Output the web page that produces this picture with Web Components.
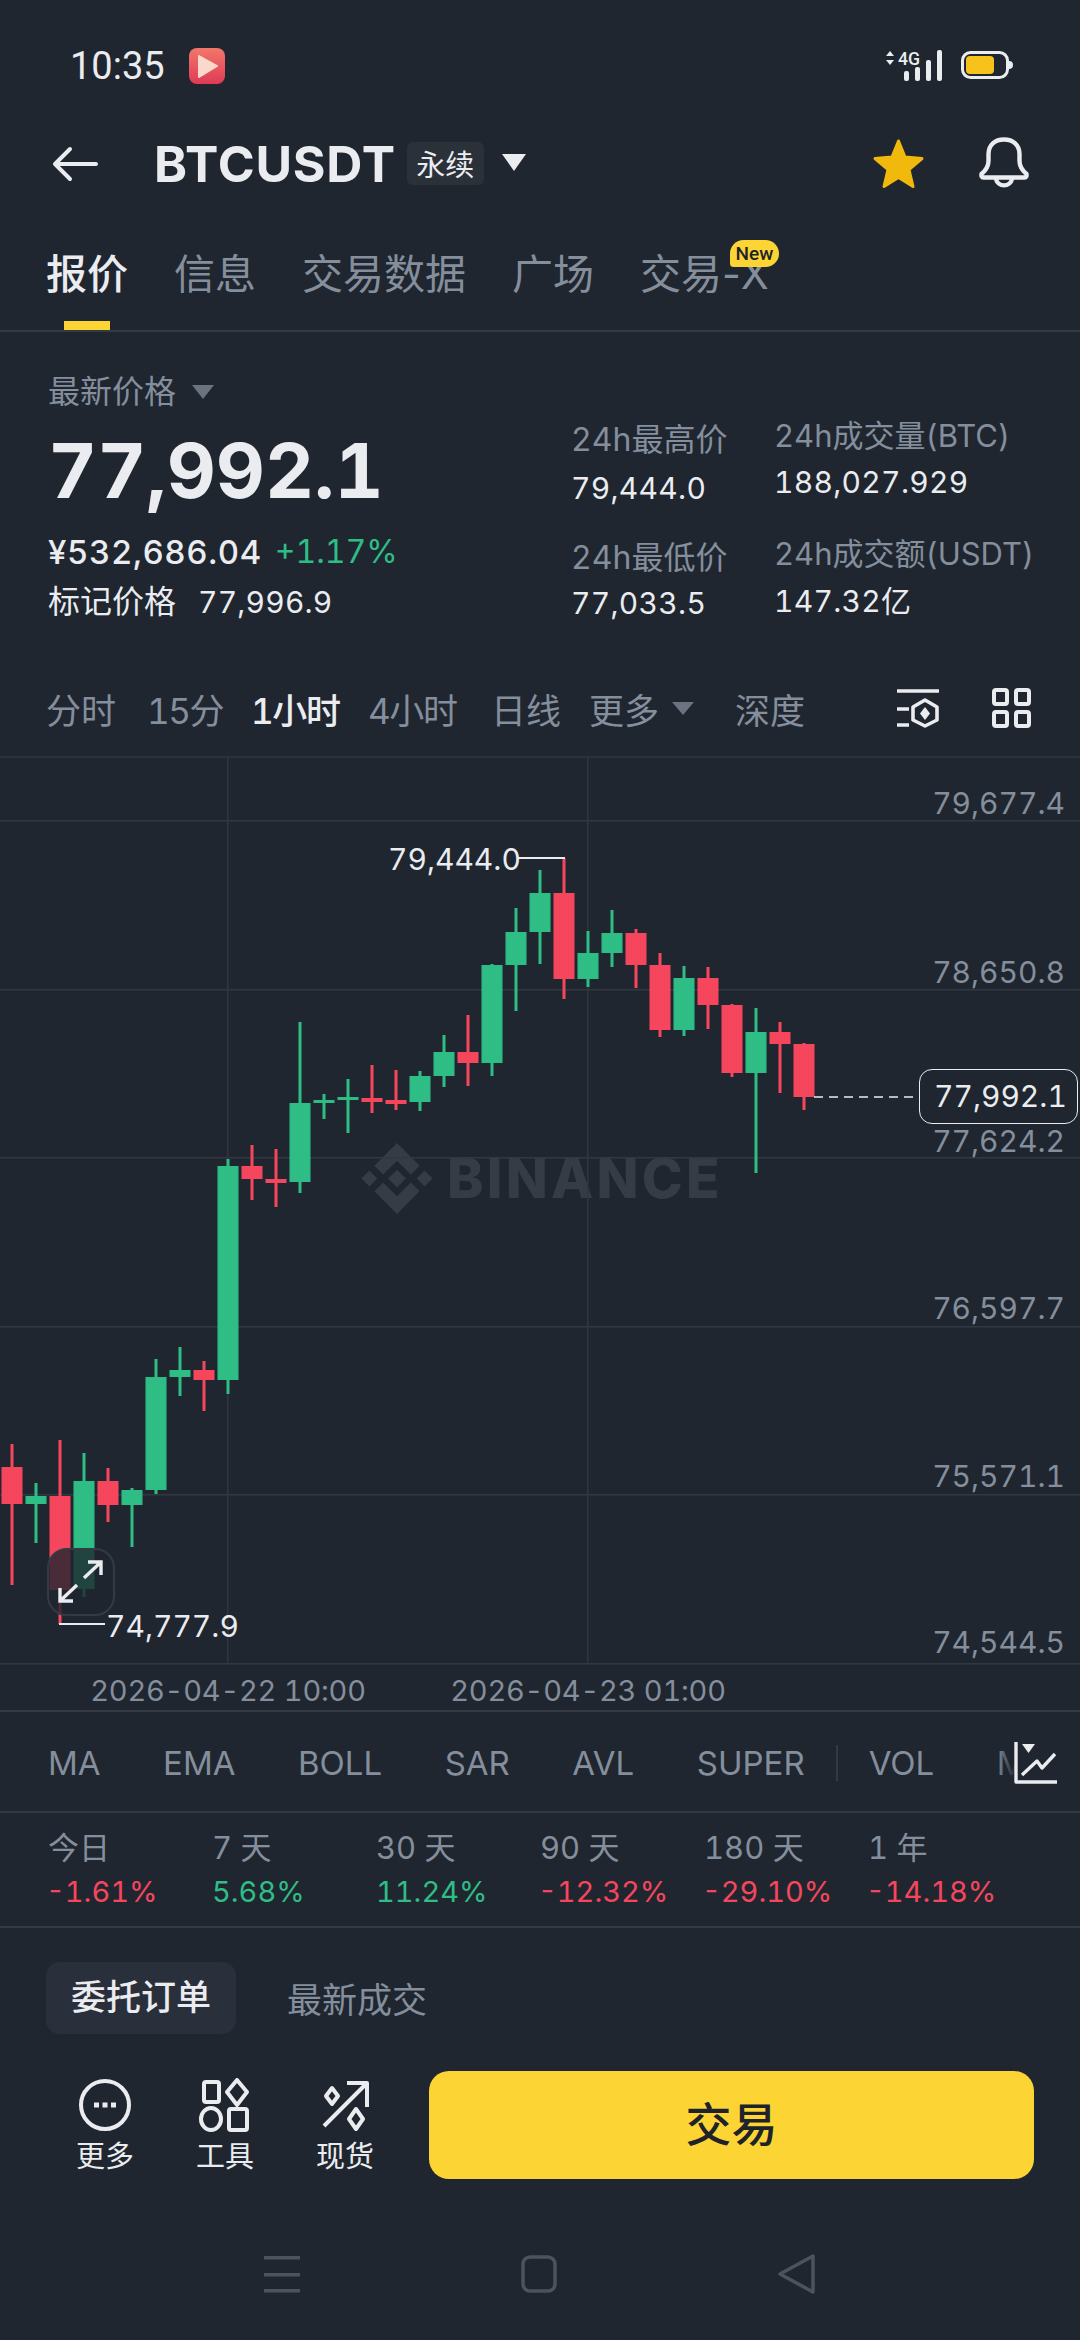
<!DOCTYPE html>
<html lang="zh">
<head>
<meta charset="utf-8">
<title>BTCUSDT</title>
<style>
  html, body { margin: 0; padding: 0; background: #1f262f; }
  body {
    width: 1080px; height: 2340px; overflow: hidden;
    font-family: Inter, "Noto Sans CJK SC", sans-serif;
    font-variant-numeric: tabular-nums;
    color: #eaecef;
  }
</style>
</head>
<body>
<status-bar></status-bar>
<pair-header></pair-header>
<tab-bar>
  <tab-item active>报价</tab-item>
  <tab-item>信息</tab-item>
  <tab-item>交易数据</tab-item>
  <tab-item>广场</tab-item>
  <tab-item badge="New">交易-X</tab-item>
</tab-bar>
<price-panel></price-panel>
<interval-bar></interval-bar>
<kline-chart></kline-chart>
<indicator-bar></indicator-bar>
<perf-row></perf-row>
<trade-footer></trade-footer>
<nav-bar></nav-bar>

<script>
class StatusBar extends HTMLElement {
  constructor() {
    super();
    this.attachShadow({ mode: 'open' });
  }
  connectedCallback() {
    this.shadowRoot.innerHTML = `
    <style>
      :host { display: flex; align-items: center; height: 110px; padding: 0 0 0 70px; box-sizing: border-box; padding-top: 22px; }
      .time { font: 400 38px/40px Roboto, sans-serif; color: #eaecef; width: 119px; }
      .app { width: 36px; height: 36px; }
      .right { margin: 0 66px 8px auto; width: 128px; height: 40px; }
    </style>
    <span class="time">10:35</span>
    <svg class="app" viewBox="0 0 36 36">
      <defs><linearGradient id="g" x1="0" y1="0" x2="0" y2="1"><stop offset="0" stop-color="#f2776a"/><stop offset="1" stop-color="#df3a55"/></linearGradient></defs>
      <rect width="36" height="36" rx="8" fill="url(#g)"/>
      <path d="M10 8 L28 18 L10 29 Z" fill="#fbd8cc" stroke="#fbd8cc" stroke-width="2" stroke-linejoin="round"/>
    </svg>
    <svg class="right" viewBox="0 -8 128 40">
      <path d="M4 1 L8 6 H0 Z M4 15 L0 10 H8 Z" fill="#eaecef"/>
      <text x="12" y="15" font-family="Roboto, sans-serif" font-size="19" font-weight="500" fill="#eaecef" textLength="22" lengthAdjust="spacingAndGlyphs">4G</text>
      <rect x="18" y="21" width="5" height="10" rx="2" fill="#eaecef"/>
      <rect x="29" y="17" width="5" height="14" rx="2" fill="#eaecef"/>
      <rect x="40" y="10" width="5" height="21" rx="2" fill="#eaecef"/>
      <rect x="51" y="0" width="5" height="31" rx="2" fill="#eaecef"/>
      <rect x="76.5" y="2.5" width="45" height="25" rx="8" fill="none" stroke="#eaecef" stroke-width="3"/>
      <rect x="80" y="6" width="28" height="18" rx="4" fill="#f8c21d"/>
      <path d="M123 11 a4 4 0 0 1 0 8 Z" fill="#eaecef"/>
    </svg>`;
  }
}
customElements.define('status-bar', StatusBar);

class PairHeader extends HTMLElement {
  constructor() {
    super();
    this.attachShadow({ mode: 'open' });
  }
  connectedCallback() {
    this.shadowRoot.innerHTML = `
    <style>
      :host { display: flex; align-items: center; height: 110px; box-sizing: border-box; padding-left: 52px; padding-bottom: 3px; }
      .back { width: 46px; height: 36px; margin-right: 56px; }
      .sym { font: 700 50px/56px Inter, sans-serif; color: #eaecef; letter-spacing: 0.8px; }
      .badge { margin-left: 11px; width: 77px; height: 43px; border-radius: 6px; background: #2b3139; font: 400 29px/43px "Noto Sans CJK SC", sans-serif; text-align: center; color: #eaecef; }
      .tri { width: 26px; height: 17px; margin: 0 0 3px 17px; }
      .star { width: 53px; height: 52px; margin-left: auto; }
      .bell { width: 50px; height: 54px; margin: 0 51px 0 54px; }
    </style>
    <svg class="back" viewBox="0 0 46 36" fill="none" stroke="#eaecef" stroke-width="4" stroke-linecap="round" stroke-linejoin="round">
      <path d="M44 18 H4 M18 3 L3 18 L18 33"/>
    </svg>
    <span class="sym">BTCUSDT</span>
    <span class="badge">永续</span>
    <svg class="tri" viewBox="0 0 26 17"><path d="M1 0 H25 L13 17 Z" fill="#eaecef"/></svg>
    <svg class="star" viewBox="0 0 53 52"><path d="M26.5 3 L33 19 L50 20.500 L37 31.500 L41 48.500 L26.500 39.500 L12 48.500 L16 31.500 L3 20.500 L20 19 Z" fill="#f0b90b" stroke="#f0b90b" stroke-width="3" stroke-linejoin="round"/></svg>
    <svg class="bell" viewBox="0 0 50 54" fill="none" stroke="#eaecef" stroke-width="4.4" stroke-linejoin="round" stroke-linecap="round">
      <path d="M2.5 37 Q9.5 31 9.5 24 V17 C9.5 8 16 2.5 25 2.5 C34 2.5 40.5 8 40.5 17 V24 Q40.5 31 47.5 37 Q48 40.5 45.5 40.5 H4.5 Q2 40.5 2.5 37 Z"/>
      <path d="M17 42 a8.2 8.2 0 0 0 16 0"/>
    </svg>`;
  }
}
customElements.define('pair-header', PairHeader);

class TabBar extends HTMLElement {
  constructor() {
    super();
    this.attachShadow({ mode: 'open' });
    this.shadowRoot.innerHTML = `
    <style>
      :host { display: flex; gap: 46px; height: 112px; box-sizing: border-box; padding-left: 46px; border-bottom: 2px solid #343a44; }
    </style>
    <slot></slot>`;
  }
}
customElements.define('tab-bar', TabBar);

class TabItem extends HTMLElement {
  constructor() {
    super();
    this.attachShadow({ mode: 'open' });
  }
  connectedCallback() {
    const active = this.hasAttribute('active');
    const badge = this.getAttribute('badge');
    this.shadowRoot.innerHTML = `
    <style>
      :host { display: block; position: relative; height: 110px; padding-top: 31px; box-sizing: border-box; font-size: 41px; line-height: 46px; font-variant-numeric: normal; color: ${active ? '#eaecef' : '#848e9c'}; font-weight: ${active ? 500 : 400}; font-family: Inter, "Noto Sans CJK SC", sans-serif; white-space: nowrap; }
      .bar { position: absolute; left: 18px; width: 46px; bottom: 0; height: 9px; background: #fcd535; }
      .new { position: absolute; left: 90px; top: 20px; width: 49px; height: 27px; border-radius: 14px 14px 14px 4px; background: #fcd535; color: #1e2329; font: 500 19px/27px Roboto, sans-serif; text-align: center; }
    </style>
    <slot></slot>
    ${active ? '<div class="bar"></div>' : ''}
    ${badge ? `<div class="new">${badge}</div>` : ''}`;
  }
}
customElements.define('tab-item', TabItem);

class StatCell extends HTMLElement {
  constructor() {
    super();
    this.attachShadow({ mode: 'open' });
  }
  connectedCallback() {
    const gap = this.getAttribute('gap') ?? '10';
    const size = this.getAttribute('size') ?? '32';
    this.shadowRoot.innerHTML = `
    <style>
      :host { display: flex; flex-direction: column; gap: ${gap}px; white-space: nowrap; }
      .k { font-size: ${size}px; line-height: 40px; color: #848e9c; }
      .v { font-size: 30px; line-height: 40px; color: #eaecef; letter-spacing: 0.3px; }
    </style>
    <div class="k">${this.getAttribute('label')}</div>
    <div class="v">${this.getAttribute('value')}</div>`;
  }
}
customElements.define('stat-cell', StatCell);

class PricePanel extends HTMLElement {
  constructor() {
    super();
    this.attachShadow({ mode: 'open' });
  }
  connectedCallback() {
    this.shadowRoot.innerHTML = `
    <style>
      :host { display: grid; grid-template-columns: 523px 203px 1fr; height: 328px; box-sizing: border-box; padding-left: 48px; }
      .left { padding-top: 40px; }
      .head { display: flex; align-items: center; gap: 16px; font-size: 32px; line-height: 40px; color: #848e9c; }
      .head svg { width: 22px; height: 14px; }
      .big { margin-top: 18px; font-size: 76px; line-height: 80px; font-weight: 700; color: #eaecef; }
      .sub { margin-top: 22px; display: flex; gap: 13px; font-size: 33px; line-height: 40px; font-weight: 500; color: #eaecef; }
      .sub span:first-child { letter-spacing: 0.6px; }
      .up { color: #2ebd85; font-weight: 400; font-size: 32px; }
      .mark { margin-top: 10px; display: flex; gap: 22px; font-size: 32px; line-height: 40px; font-weight: 400; color: #eaecef; }
      .mark span + span { font-size: 30px; letter-spacing: 0.2px; }
      .col { display: flex; flex-direction: column; }
      .c1 { padding-top: 88px; gap: 30px; }
      .c2 { padding-top: 84px; gap: 32px; }
    </style>
    <div class="left">
      <div class="head">最新价格<svg viewBox="0 0 22 14"><path d="M0 0 H22 L11 14 Z" fill="#6b7380"/></svg></div>
      <div class="big">77,992.1</div>
      <div class="sub"><span>¥532,686.04</span><span class="up">+1.17%</span></div>
      <div class="mark"><span>标记价格</span><span>77,996.9</span></div>
    </div>
    <div class="col c1">
      <stat-cell label="24h最高价" value="79,444.0" gap="8"></stat-cell>
      <stat-cell label="24h最低价" value="77,033.5" gap="5"></stat-cell>
    </div>
    <div class="col c2">
      <stat-cell label="24h成交量(BTC)" value="188,027.929" gap="6" size="31"></stat-cell>
      <stat-cell label="24h成交额(USDT)" value="147.32亿" gap="7" size="31"></stat-cell>
    </div>`;
  }
}
customElements.define('price-panel', PricePanel);

class IntervalBar extends HTMLElement {
  constructor() {
    super();
    this.attachShadow({ mode: 'open' });
  }
  connectedCallback() {
    // ancho de inicio a inicio de cada intervalo
    const items = [['分时', 101], ['15分', 104], ['1小时', 117], ['4小时', 123], ['日线', 98]];
    this.shadowRoot.innerHTML = `
    <style>
      :host { display: flex; align-items: center; height: 96px; box-sizing: border-box; padding: 0 49px 0 46px; font-size: 35px; color: #848e9c; white-space: nowrap; }
      .on { color: #eaecef; font-weight: 500; }
      .num { letter-spacing: -1.4px; }
      .more { display: flex; align-items: center; gap: 13px; width: 146px; }
      .more svg { width: 22px; height: 13px; }
      .icons { margin-left: auto; display: flex; gap: 53px; }
      .icons svg { width: 42px; height: 40px; }
      .icons svg + svg { width: 39px; }
    </style>
    ${items.map(([t, w]) => `<span class="${t === '1小时' ? 'on' : ''} ${/\d/.test(t) ? 'num' : ''}" style="width:${w}px">${t}</span>`).join('')}
    <span class="more">更多<svg viewBox="0 0 22 13"><path d="M0 0 H22 L11 13 Z" fill="#6b7380"/></svg></span>
    <span>深度</span>
    <div class="icons">
      <svg viewBox="0 0 42 40" fill="none" stroke="#eaecef" stroke-width="3.6">
        <path d="M0 3 H42 M0 21 H12 M0 37 H12"/>
        <path d="M28 12 L40 19 V32 L28 38 L16 32 V19 Z" stroke-linejoin="round"/>
        <path d="M28 19 L33 25.500 L28 32 L23 25.500 Z" fill="#eaecef" stroke="none"/>
      </svg>
      <svg viewBox="0 0 39 40" fill="none" stroke="#eaecef" stroke-width="4">
        <rect x="2" y="2" width="13" height="14" rx="2"/><rect x="24" y="2" width="13" height="14" rx="2"/>
        <rect x="2" y="24" width="13" height="14" rx="2"/><rect x="24" y="24" width="13" height="14" rx="2"/>
      </svg>
    </div>`;
  }
}
customElements.define('interval-bar', IntervalBar);

// x, wick top, wick bottom, body top, body bottom, color (coordenadas de pantalla)
const CANDLES = [
  [12, 1444, 1585, 1467, 1504, 'r'], [36, 1483, 1543, 1496, 1504, 'g'],
  [60, 1440, 1624, 1496, 1590, 'r'], [84, 1453, 1597, 1481, 1589, 'g'],
  [108, 1468, 1522, 1481, 1505, 'r'], [132, 1488, 1547, 1490, 1505, 'g'],
  [156, 1359, 1494, 1377, 1490, 'g'], [180, 1347, 1396, 1370, 1377, 'g'],
  [204, 1361, 1411, 1370, 1380, 'r'], [228, 1159, 1394, 1166, 1380, 'g'],
  [252, 1145, 1200, 1166, 1179, 'r'], [276, 1149, 1207, 1179, 1183, 'r'],
  [300, 1022, 1193, 1103, 1182, 'g'], [324, 1094, 1119, 1100, 1103, 'g'],
  [348, 1079, 1133, 1097, 1100, 'g'], [372, 1065, 1113, 1098, 1102, 'r'],
  [396, 1070, 1110, 1100, 1104, 'r'], [420, 1071, 1111, 1076, 1102, 'g'],
  [444, 1035, 1087, 1052, 1076, 'g'], [468, 1015, 1086, 1052, 1063, 'r'],
  [492, 964, 1076, 965, 1063, 'g'], [516, 908, 1011, 932, 965, 'g'],
  [540, 870, 964, 893, 932, 'g'], [564, 858, 999, 893, 979, 'r'],
  [588, 931, 987, 953, 979, 'g'], [612, 910, 967, 933, 953, 'g'],
  [636, 929, 988, 933, 965, 'r'], [660, 953, 1037, 965, 1030, 'r'],
  [684, 966, 1036, 978, 1030, 'g'], [708, 967, 1029, 978, 1005, 'r'],
  [732, 1004, 1077, 1005, 1073, 'r'], [756, 1008, 1173, 1032, 1073, 'g'],
  [780, 1022, 1093, 1032, 1044, 'r'], [804, 1043, 1110, 1044, 1097, 'r']
];

class KlineChart extends HTMLElement {
  constructor() {
    super();
    this.attachShadow({ mode: 'open' });
  }
  connectedCallback() {
    const top = 756;
    const colors = { r: '#f6465d', g: '#2ebd85' };
    const gridY = [820, 989, 1157, 1326, 1494, 1663];
    const axis = [['79,677.4', 803], ['78,650.8', 972], ['77,624.2', 1141], ['76,597.7', 1308], ['75,571.1', 1476], ['74,544.5', 1642]];
    const candles = CANDLES.map(([x, wt, wb, bt, bb, c]) =>
      `<rect x="${x - 1.5}" y="${wt - top}" width="3" height="${wb - wt}" fill="${colors[c]}"/>` +
      `<rect x="${x - 10.5}" y="${bt - top}" width="21" height="${bb - bt}" fill="${colors[c]}"/>`).join('');
    this.shadowRoot.innerHTML = `
    <style>
      :host { display: block; position: relative; height: 956px; border-top: 2px solid #2c323c; box-sizing: border-box; border-bottom: 2px solid #343a44; overflow: hidden; }
      svg.plot { position: absolute; left: 0; top: -2px; width: 1080px; height: 956px; }
      .wm { position: absolute; left: 361px; top: ${1143 - top - 2}px; display: flex; align-items: center; gap: 14px; color: #353c46; font: 800 55px/71px Inter, sans-serif; letter-spacing: 3.2px; }
      .wm svg { width: 72px; height: 71px; }
      .t { position: absolute; font-size: 30px; line-height: 36px; white-space: nowrap; }
      .ax { right: 15px; color: #848e9c; }
      .hl { color: #eaecef; }
      .last { position: absolute; left: 919px; top: ${1069 - top - 2}px; width: 159px; height: 55px; box-sizing: border-box; border: 1.5px solid #eaecef; border-radius: 13px; background: #1f262f; color: #eaecef; font-size: 30px; line-height: 52px; padding-left: 14px; white-space: nowrap; }
      .date { color: #848e9c; transform: translateX(-50%); font-size: 29px; letter-spacing: -0.2px; }
      .expand { position: absolute; left: 47px; top: ${1548 - top - 2}px; width: 68px; height: 68px; box-sizing: border-box; border: 2.5px solid #343a44; border-radius: 20px; background: rgba(31, 38, 47, 0.8); }
      .expand svg { display: block; width: 63px; height: 63px; }
    </style>
    <div class="wm">
      <svg viewBox="0 0 72 72" fill="#353c46">
        <path d="M36 0 L59 23 L50 32 L36 18 L22 32 L13 23 Z"/>
        <path d="M36 72 L59 49 L50 40 L36 54 L22 40 L13 49 Z"/>
        <path d="M36 27 L45 36 L36 45 L27 36 Z"/>
        <path d="M8 28 L16 36 L8 44 L0 36 Z"/>
        <path d="M64 28 L72 36 L64 44 L56 36 Z"/>
      </svg>
      <span>BINANCE</span>
    </div>
    <svg class="plot" viewBox="0 0 1080 956">
      ${gridY.map(y => `<rect x="0" y="${y - top}" width="1080" height="1.500" fill="#323842"/>`).join('')}
      <rect x="227" y="0" width="1.500" height="${1663 - top}" fill="#2f3640"/>
      <rect x="587" y="0" width="1.500" height="${1663 - top}" fill="#2f3640"/>
      ${candles}
      <path d="M518 ${858 - top} H565" stroke="#eaecef" stroke-width="2" fill="none"/>
      <path d="M59 ${1624 - top} H105" stroke="#eaecef" stroke-width="2" fill="none"/>
      <path d="M814 ${1097 - top} H919" stroke="#eaecef" stroke-width="1.500" stroke-dasharray="9 6" fill="none"/>
    </svg>
    ${axis.map(([v, y]) => `<span class="t ax" style="top:${y - top - 20}px">${v}</span>`).join('')}
    <span class="t hl" style="left:388px;top:${859 - top - 20}px">79,444.0</span>
    <span class="t hl" style="left:106px;top:${1626 - top - 20}px">74,777.9</span>
    <div class="last">77,992.1</div>
    <span class="t date" style="left:228px;top:${1690 - top - 19}px">2026-04-22 10:00</span>
    <span class="t date" style="left:588px;top:${1690 - top - 19}px">2026-04-23 01:00</span>
    <div class="expand">
      <svg viewBox="0 0 63 63" fill="none" stroke="#eaecef" stroke-width="3.4">
        <path d="M35 28 L52 12 M39 12 H52 V25"/>
        <path d="M28 35 L11 51 M11 38 V51 H24"/>
      </svg>
    </div>`;
  }
}
customElements.define('kline-chart', KlineChart);

class IndicatorBar extends HTMLElement {
  constructor() {
    super();
    this.attachShadow({ mode: 'open' });
  }
  connectedCallback() {
    const items = ['MA', 'EMA', 'BOLL', 'SAR', 'AVL', 'SUPER'];
    this.shadowRoot.innerHTML = `
    <style>
      :host { display: flex; position: relative; align-items: center; height: 101px; box-sizing: border-box; padding: 2px 0 0 48px; gap: 62.500px; border-bottom: 2px solid #343a44; font: 400 33px/40px Inter, sans-serif; color: #848e9c; overflow: hidden; white-space: nowrap; }
      .div { width: 2px; height: 36px; background: #343a44; margin: 0 -32px 0 -31px; }
      .fade { position: absolute; right: 0; top: 0; bottom: 0; width: 84px; background: linear-gradient(90deg, rgba(31,38,47,0), #1f262f 20px); display: flex; align-items: center; }
      .fade svg { width: 44px; height: 44px; margin-left: 18px; margin-top: 2px; }
    </style>
    ${items.map(t => `<span>${t}</span>`).join('')}
    <span class="div"></span>
    <span>VOL</span>
    <span>M</span>
    <div class="fade">
      <svg viewBox="0 0 44 44" fill="none" stroke="#eaecef" stroke-width="3.4" stroke-linejoin="round">
        <path d="M2 1 V41 H43"/>
        <path d="M8 34 L23 20 L28 27 L41 13"/>
        <path d="M8 3 H21 L14.5 12 Z" fill="#eaecef" stroke="none"/>
      </svg>
    </div>`;
  }
}
customElements.define('indicator-bar', IndicatorBar);

class PerfRow extends HTMLElement {
  constructor() {
    super();
    this.attachShadow({ mode: 'open' });
  }
  connectedCallback() {
    const cells = [['今日', '-1.61%', 'd'], ['7 天', '5.68%', 'u'], ['30 天', '11.24%', 'u'], ['90 天', '-12.32%', 'd'], ['180 天', '-29.10%', 'd'], ['1 年', '-14.18%', 'd']];
    this.shadowRoot.innerHTML = `
    <style>
      :host { display: grid; grid-template-columns: repeat(6, 164px); height: 115px; box-sizing: border-box; padding: 16px 0 0 48px; border-bottom: 2px solid #343a44; }
      .k { font-size: 31px; line-height: 38px; color: #848e9c; }
      .v { font-size: 29px; line-height: 38px; margin-top: 6px; }
      .u { color: #2ebd85; }
      .d { color: #f6465d; margin-left: -2px; }
    </style>
    ${cells.map(([k, v, c]) => `<div><div class="k">${k}</div><div class="v ${c}">${v}</div></div>`).join('')}`;
  }
}
customElements.define('perf-row', PerfRow);

class TradeFooter extends HTMLElement {
  constructor() {
    super();
    this.attachShadow({ mode: 'open' });
  }
  connectedCallback() {
    this.shadowRoot.innerHTML = `
    <style>
      :host { display: block; height: 272px; box-sizing: border-box; padding-top: 34px; }
      .tabs { display: flex; align-items: center; gap: 51px; padding-left: 46px; font-size: 35px; color: #848e9c; }
      .pill { width: 190px; height: 72px; border-radius: 14px; background: #2a303b; color: #eaecef; font-weight: 500; text-align: center; line-height: 70px; }
      .tabs div + div { margin-top: -2px; }
      .acts { display: flex; margin-top: 37px; padding-left: 45px; }
      .act { width: 120px; display: flex; flex-direction: column; align-items: center; padding-top: 7px; font-size: 29px; line-height: 36px; color: #eaecef; }
      .act svg { width: 56px; height: 56px; margin-bottom: 5px; }
      .go { margin-left: 24px; width: 605px; height: 108px; border: 0; border-radius: 20px; background: #fcd535; color: #1e2329; font: 500 46px/106px Inter, "Noto Sans CJK SC", sans-serif; text-align: center; }
    </style>
    <div class="tabs"><div class="pill">委托订单</div><div>最新成交</div></div>
    <div class="acts">
      <div class="act">
        <svg viewBox="0 0 56 56" fill="none" stroke="#eaecef" stroke-width="4">
          <circle cx="28" cy="27" r="24"/>
          <rect x="17" y="24.500" width="5" height="5" fill="#eaecef" stroke="none"/>
          <rect x="25.500" y="24.500" width="5" height="5" fill="#eaecef" stroke="none"/>
          <rect x="34" y="24.500" width="5" height="5" fill="#eaecef" stroke="none"/>
        </svg>
        更多
      </div>
      <div class="act">
        <svg viewBox="0 0 56 56" fill="none" stroke="#eaecef" stroke-width="4" stroke-linejoin="round">
          <rect x="7" y="4" width="15" height="20" rx="2"/>
          <path d="M40 2 L50 14 L40 27 L30 14 Z"/>
          <ellipse cx="14" cy="41" rx="10" ry="11"/>
          <rect x="32" y="31" width="18" height="21" rx="2"/>
        </svg>
        工具
      </div>
      <div class="act">
        <svg viewBox="0 0 56 56" fill="none" stroke="#eaecef" stroke-width="4" stroke-linejoin="round">
          <path d="M7 49 L49 7 M30 6 H50 V30" transform="translate(0 -1)"/>
          <path d="M15 11 L21 19 L15 27 L9 19 Z" transform="translate(0 -1)"/>
          <path d="M39 31 L46 41 L39 51 L32 41 Z"/>
        </svg>
        现货
      </div>
      <div class="go">交易</div>
    </div>`;
  }
}
customElements.define('trade-footer', TradeFooter);

class NavBar extends HTMLElement {
  constructor() {
    super();
    this.attachShadow({ mode: 'open' });
  }
  connectedCallback() {
    this.shadowRoot.innerHTML = `
    <style>
      :host { display: flex; height: 140px; box-sizing: border-box; padding: 54px 0 0 264px; gap: 220px; }
      svg { width: 37px; height: 40px; }
    </style>
    <svg viewBox="0 0 37 40" fill="#4c535d"><rect y="2" width="36" height="3.500"/><rect y="19" width="36" height="3.500"/><rect y="35" width="36" height="3.500"/></svg>
    <svg viewBox="0 0 37 40" fill="none" stroke="#4c535d" stroke-width="3.500"><rect x="2" y="3" width="32" height="34" rx="7"/></svg>
    <svg viewBox="0 0 37 40" fill="none" stroke="#4c535d" stroke-width="3.500" stroke-linejoin="round"><path d="M35 2 V38 L2 20 Z"/></svg>`;
  }
}
customElements.define('nav-bar', NavBar);
</script>
</body>
</html>
